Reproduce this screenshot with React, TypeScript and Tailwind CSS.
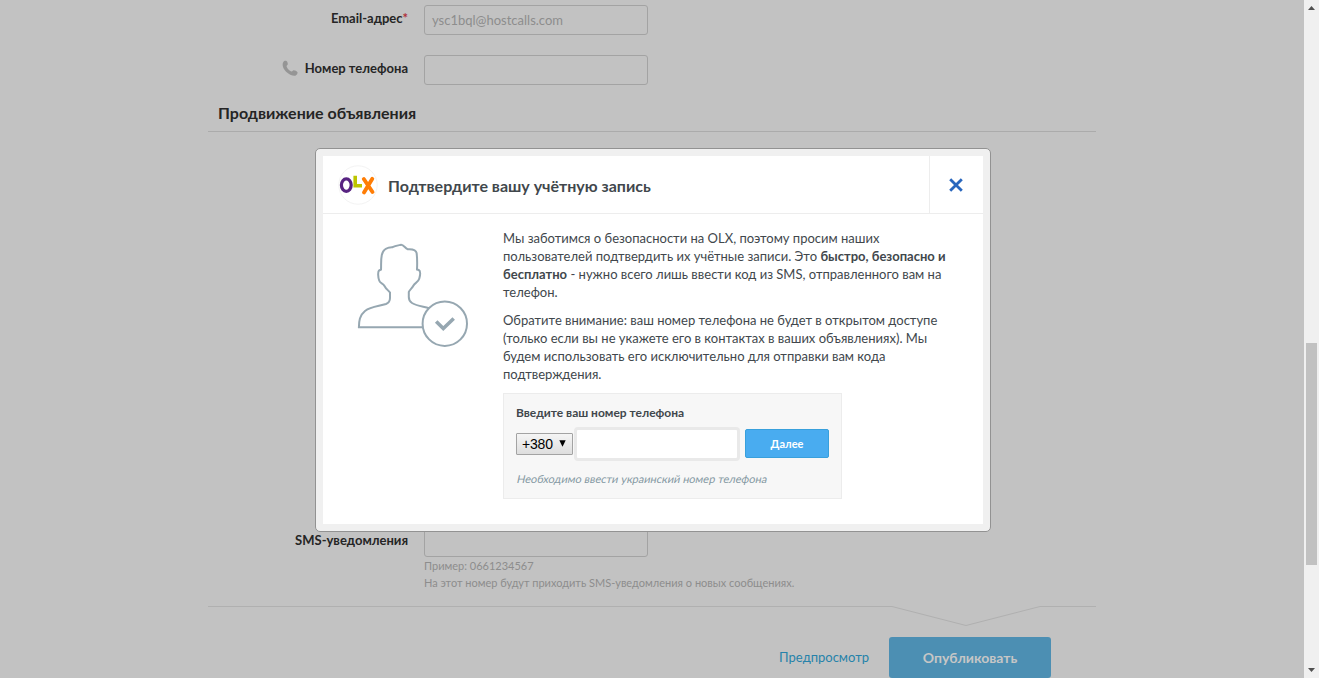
import React from "react";

function Field({
  label,
  value,
  required,
  icon,
}: {
  label: string;
  value?: string;
  required?: boolean;
  icon?: React.ReactNode;
}) {
  return (
    <div className="flex h-[30px] items-start">
      <label className="flex w-[200px] items-center justify-end text-[13px] leading-[26px] font-bold text-[#252525]">
        {icon}
        <span>
          {label}
          {required && <span className="text-[#b0303a]">*</span>}
        </span>
      </label>
      <div className="ml-4 flex h-[30px] w-[224px] items-center rounded-[3px] border border-[#a3a3a3] px-[7px] pt-px text-[13px] text-[#8d8d8d]">
        {value}
      </div>
    </div>
  );
}

function PhoneIcon() {
  return (
    <svg className="mr-[7px] h-4 w-4" viewBox="0 0 16 16" fill="#959595">
      <path d="M1.2 2.2C2 .9 3.6.4 4.5 1.1c.8.7 1.4 2.1 1.3 3.2C5.700 5.200 4.500 5.500 4.600 6.200c.2 1.800 3.200 5 5 5.200.8.1 1.100-1 2-1.200 1.100-.2 3.200.9 3.800 1.900.6 1.300-.6 3-2 3.600C9.200 16.700 2 11.300.9 6.500.5 4.900.6 3.200 1.200 2.200Z" />
    </svg>
  );
}

function Logo() {
  return (
    <svg className="h-10 w-10 shrink-0" viewBox="0 0 40 40" fill="none">
      <circle cx="20" cy="20" r="19.2" stroke="#f3f3f3" />
      <ellipse cx="8.300" cy="20.100" rx="4.900" ry="6.200" stroke="#572381" strokeWidth="3.200" />
      <path d="M17.200 10.800V20.800H24" stroke="#bdc500" strokeWidth="3.600" />
      <path d="M25.800 14L34.500 27M34.300 13.800L26 27.400" stroke="#ff7d05" strokeWidth="3.900" strokeLinecap="round" />
    </svg>
  );
}

function UserIllustration() {
  return (
    <svg className="h-[120px] w-[130px]" viewBox="0 0 130 120" fill="none" stroke="#96a7b1" strokeWidth="2">
      <path d="M79 73.300C73 71.500 67 71 62 68C59.600 66.500 58.800 65 58.800 62V57C59.300 55 62 53.500 63.500 50.500C65 47.500 68 48 69.300 43.500C70.300 40 70.600 36 68.700 35L67 34.500C67.300 28 67.300 23 66.600 18C66 14.500 63 13.800 57.500 14.200C55 13 53.500 9.500 51 9.800C48 10.400 45 10.700 42.500 12.200C38 12 33 14 31.800 20C30.700 25 31.300 30 31 34.500L29 35.500C27.700 37 28 42 29.200 45.500C30 48.500 33 48 34.500 51C36 54 38.500 55.500 40 57.500V63C40 66.500 38.500 68 36 69C29 71.300 21 71.500 15 76C9.500 80.500 9 86 8.900 92.300H73" />
      <circle cx="94.800" cy="88.700" r="22.200" />
      <path d="M86.200 86.500L93.300 93.500L103.700 83.500" strokeWidth="3.600" />
    </svg>
  );
}

function Dialog() {
  return (
    <div
      role="dialog"
      className="absolute top-[148px] left-[315px] h-[384px] w-[676px] rounded-[5px] border border-[#929292] bg-[#f0f0f0] p-[7px] text-[#41474c]"
    >
      <div className="flex h-full flex-col bg-white">
        <header className="flex h-[58px] shrink-0 border-b border-[#ededed]">
          <div className="flex flex-1 items-center gap-[10px] pl-[15px]">
            <Logo />
            <h2 className="pt-[2px] text-[16px] leading-5 font-bold">Подтвердите вашу учётную запись</h2>
          </div>
          <button className="flex w-[54px] items-center justify-center border-l border-[#ededed] pr-[2px]" aria-label="Закрыть">
            <svg className="h-[14px] w-[14px]" viewBox="0 0 14 14" stroke="#2866bd" strokeWidth="2.800">
              <path d="M1.200 1.200L12.800 12.800M12.800 1.200L1.200 12.800" />
            </svg>
          </button>
        </header>
        <div className="flex">
          <div className="w-[180px] shrink-0 pt-[21px] pl-[27px]">
            <UserIllustration />
          </div>
          <div className="w-[460px] pt-[15px] text-[13px] leading-[18px]">
            <p className="whitespace-nowrap">
              Мы заботимся о безопасности на OLX, поэтому просим наших
              <br />
              пользователей подтвердить их учётные записи. Это <b>быстро, безопасно и</b>
              <br />
              <b>бесплатно</b> - нужно всего лишь ввести код из SMS, отправленного вам на
              <br />
              телефон.
            </p>
            <p className="mt-[10px] whitespace-nowrap">
              Обратите внимание: ваш номер телефона не будет в открытом доступе
              <br />
              (только если вы не укажете его в контактах в ваших объявлениях). Мы
              <br />
              будем использовать его исключительно для отправки вам кода
              <br />
              подтверждения.
            </p>
            <div className="mt-[10px] h-[106px] w-[339px] border border-[#ececec] bg-[#f7f7f7] px-3 pt-[10px]">
              <div className="text-[12px] leading-[18px] font-bold">Введите ваш номер телефона</div>
              <div className="mt-[5px] flex h-[34px] items-center">
                <div className="flex h-[22px] w-[57px] items-center justify-between rounded-[1px] border border-[#a3a3a3] bg-linear-to-b from-[#f5f5f5] to-[#dedede] pr-[6px] pl-[5px] font-['Liberation_Sans',sans-serif] text-[14px] tracking-[-0.2px] text-black">
                  <span>+380</span>
                  <svg className="mb-px h-[7px] w-[7px]" viewBox="0 0 7 7">
                    <path d="M.3 .3H6.700L3.500 6.700Z" fill="black" />
                  </svg>
                </div>
                <div className="ml-[1px] h-[34px] w-[166px] rounded-[4px] border-[3px] border-[#e9e9e9] bg-white" />
                <button className="mb-px ml-[5px] h-[29px] w-[84px] rounded-[2px] border border-[#38a0dc] bg-[#49acf0] pt-px text-[11px] font-bold text-white">
                  Далее
                </button>
              </div>
              <div className="mt-[9px] pl-px text-[11px] leading-[18px] text-[#8599a3]">
                <span className="inline-block -skew-x-12">Необходимо ввести украинский номер телефона</span>
              </div>
            </div>
          </div>
        </div>
      </div>
    </div>
  );
}

export default function App() {
  return (
    <div className="relative flex h-[678px] w-[1319px] overflow-hidden bg-[#c2c2c2] font-['Lato',sans-serif]">
      <main className="ml-[208px] flex w-[888px] flex-col pt-[5px]">
        <Field label="Email-адрес" value="ysc1bql@hostcalls.com" required />
        <div className="h-5" />
        <Field label="Номер телефона" icon={<PhoneIcon />} />
        <h1 className="mt-[17px] h-[30px] border-b border-[#ababab] pl-[10px] text-[16px] leading-[21px] font-bold text-[#252525]">
          Продвижение объявления
        </h1>
        <div className="mt-[395px]">
          <Field label="SMS-уведомления" />
        </div>
        <div className="ml-[216px] pb-px text-[11px] leading-[17px] text-[#8d8d8d]">
          <div>Пример: 0661234567</div>
          <div>На этот номер будут приходить SMS-уведомления о новых сообщениях.</div>
        </div>
        <svg className="mt-[13px] h-[22px] w-[888px] shrink-0" viewBox="0 0 888 22" fill="none" stroke="#b0b0b0">
          <path d="M0 1.500H684L758 20.500L832 1.500H888" />
        </svg>
        <div className="mt-[10px] flex items-center justify-end pr-[45px]">
          <a className="mr-5 text-[13px] text-[#2682aa]">Предпросмотр</a>
          <button className="h-[41px] w-[162px] rounded-[3px] bg-[#4c8fb3] text-[14px] font-bold text-[#c6c6c6]">
            Опубликовать
          </button>
        </div>
      </main>
      <div className="ml-auto flex w-[15px] flex-col items-center bg-[#f0f0f0]">
        <svg className="mt-[6px] h-[4px] w-[7px]" viewBox="0 0 7 4" fill="#505050">
          <path d="M0 4L3.500 0L7 4Z" />
        </svg>
        <div className="mt-[333px] h-[222px] w-[11px] bg-[#c1c1c1]" />
        <svg className="mt-auto mb-[6px] h-[4px] w-[7px]" viewBox="0 0 7 4" fill="#505050">
          <path d="M0 0H7L3.500 4Z" />
        </svg>
      </div>
      <Dialog />
    </div>
  );
}
